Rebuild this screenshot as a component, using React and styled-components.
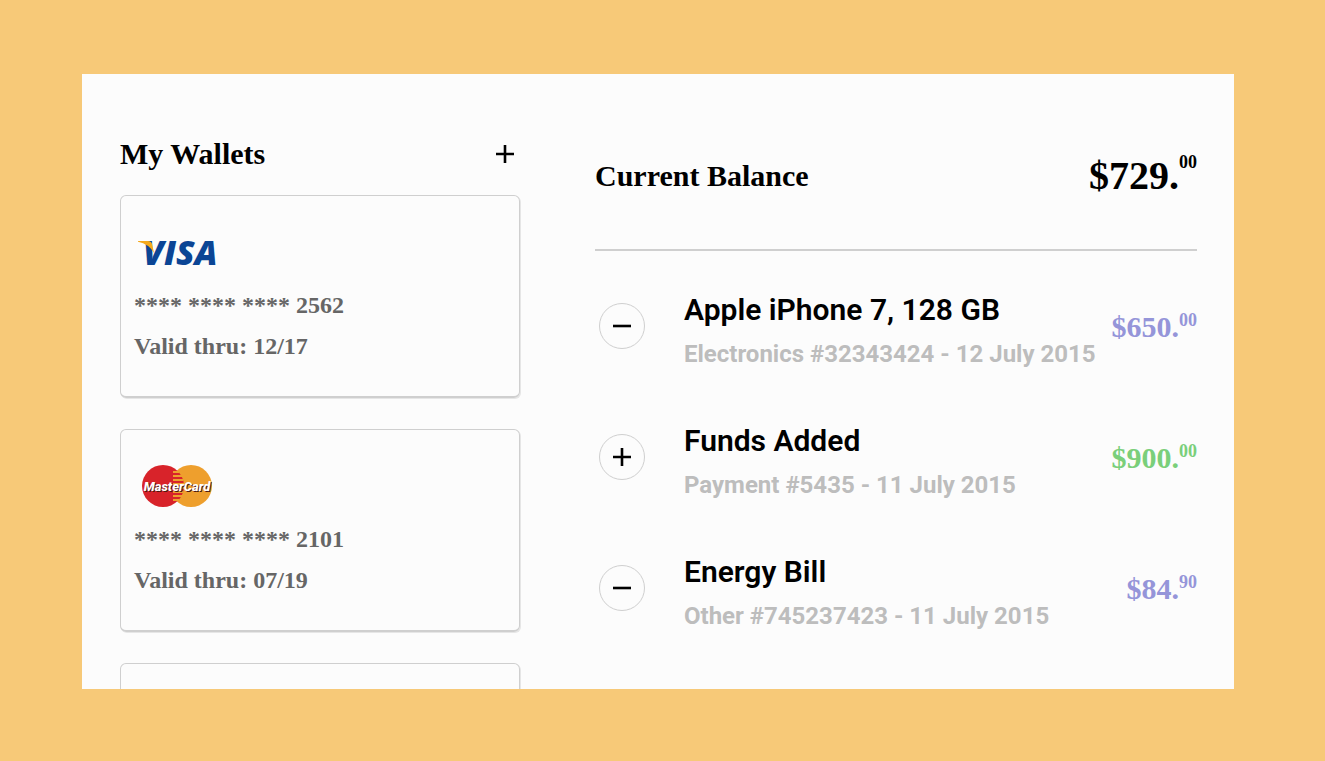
import React from "react";
import styled, { createGlobalStyle } from "styled-components";

const GlobalStyle = createGlobalStyle`
  *, *::before, *::after { box-sizing: border-box; }
  body {
    margin: 0;
    background: #f7c978;
    color: #000;
    font-family: "Liberation Serif", "Times New Roman", serif;
  }
  h1, h2, h3, p, ul { margin: 0; padding: 0; }
  ul { list-style: none; }
`;

const Page = styled.div`
  display: flex;
  height: 100vh;
  padding: 74px 91px 72px 82px;
`;

const Panel = styled.main`
  flex: 1;
  display: grid;
  grid-template-columns: minmax(0, 200fr) minmax(0, 301fr);
  align-items: start;
  column-gap: 75px;
  padding: 0 37px 0 38px;
  overflow: hidden;
  background: #fcfcfc;
`;

const Wallets = styled.section`
  padding-top: 60px;
`;

const WalletsHeader = styled.header`
  display: flex;
  align-items: center;
  justify-content: space-between;
  height: 40px;
  margin-bottom: 21px;
  padding-right: 3px;
`;

const Heading = styled.h2`
  font-size: 30px;
  line-height: 40px;
  font-weight: 700;
`;

const AddButton = styled.button`
  display: flex;
  padding: 0;
  border: 0;
  background: none;
  color: inherit;
  cursor: pointer;
`;

const CardList = styled.ul`
  display: flex;
  flex-direction: column;
  gap: 31px;
`;

const Card = styled.li`
  display: flex;
  flex-direction: column;
  align-items: flex-start;
  height: 203px;
  padding: 29px 13px 20px;
  border: 1px solid #cfcfcf;
  border-bottom-width: 2px;
  border-radius: 6px;
  box-shadow: 1px 1px 0 #e6e6e6;
`;

const CardLogo = styled.svg`
  display: block;
  flex: none;
  width: 88px;
  height: 56px;
  margin-bottom: 4px;
`;

const CardText = styled.p`
  color: #666;
  font-size: 24px;
  line-height: 41px;
  font-weight: 700;
  white-space: nowrap;
`;

const Activity = styled.section`
  padding-top: 76px;
`;

const Balance = styled.header`
  display: flex;
  align-items: center;
  justify-content: space-between;
  height: 101px;
  margin-bottom: 15px;
  padding-bottom: 48px;
  border-bottom: 2px solid #cfcfcf;
`;

const colors = { total: "#000", debit: "#9595d9", credit: "#7acf7a" };

const Money = styled.p`
  display: flex;
  align-items: flex-start;
  color: ${({ $tone }) => colors[$tone]};
  font-size: ${({ $tone }) => ($tone === "total" ? 40 : 30)}px;
  line-height: 40px;
  font-weight: 700;
`;

const Cents = styled.sup`
  font-size: 18px;
  line-height: ${({ $tone }) => ($tone === "total" ? 12 : 26)}px;
  font-weight: 700;
`;

const Row = styled.li`
  display: flex;
  align-items: center;
  height: 131px;
  padding-left: 4px;
  font-family: Roboto, "Liberation Sans", sans-serif;
`;

const Badge = styled.span`
  display: flex;
  flex: none;
  align-items: center;
  justify-content: center;
  width: 46px;
  height: 46px;
  margin: 0 39px 12px 0;
  border: 1px solid #cfcfcf;
  border-radius: 50%;
`;

const Details = styled.div`
  flex: 1;
  min-width: 0;
  white-space: nowrap;
`;

const Title = styled.h3`
  font-size: 30px;
  line-height: 44px;
  font-weight: 600;
`;

const Meta = styled.p`
  color: #bdbdbd;
  font-size: 24px;
  line-height: 44px;
  font-weight: 700;
`;

const Price = styled.div`
  margin-bottom: 10px;
  font-family: "Liberation Serif", "Times New Roman", serif;
`;

function SignIcon({ plus }) {
  return (
    <svg width="24" height="24" viewBox="0 0 24 24" fill="none" stroke="#000" strokeWidth="2.6" aria-hidden="true">
      <path d={plus ? "M3 12H21M12 3V21" : "M3 12H21"} />
    </svg>
  );
}

function Amount({ whole, cents, tone }) {
  return (
    <Money $tone={tone}>
      ${whole}.<Cents $tone={tone}>{cents}</Cents>
    </Money>
  );
}

function VisaLogo() {
  return (
    <CardLogo viewBox="0 0 88 56" role="img" aria-label="Visa">
      <text x="9" y="40" fill="#0b4595" fontFamily="'Open Sans', 'Noto Sans', sans-serif" fontSize="34" fontWeight="800" fontStyle="italic">
        VISA
      </text>
      <path d="M4 16H14Q17.5 16 18.2 19.5L20 28Q15 19 4 16.8Z" fill="#f6a91b" />
    </CardLogo>
  );
}

function MasterCardLogo() {
  return (
    <CardLogo viewBox="0 0 88 56" role="img" aria-label="MasterCard">
      <circle cx="57" cy="27" r="21" fill="#ee9f2d" />
      <circle cx="29" cy="27" r="21" fill="#d8232a" />
      <path
        d="M39 13H45M39 17H48M39 21H49M39 25H50M39 29H50M39 33H49M39 37H48M39 41H45"
        stroke="#ee9f2d"
        strokeWidth="1.8"
      />
      <text
        x="43"
        y="32"
        textAnchor="middle"
        fill="#fff"
        fontFamily="Roboto, 'Liberation Sans', sans-serif"
        fontSize="13"
        fontWeight="800"
        fontStyle="italic"
        style={{ textShadow: "1px 1px 0 #4a1a12" }}
      >
        MasterCard
      </text>
    </CardLogo>
  );
}

const wallets = [
  { Logo: VisaLogo, digits: "2562", valid: "12/17" },
  { Logo: MasterCardLogo, digits: "2101", valid: "07/19" },
];

const transactions = [
  { title: "Apple iPhone 7, 128 GB", meta: "Electronics #32343424 - 12 July 2015", whole: "650", cents: "00", tone: "debit" },
  { title: "Funds Added", meta: "Payment #5435 - 11 July 2015", whole: "900", cents: "00", tone: "credit" },
  { title: "Energy Bill", meta: "Other #745237423 - 11 July 2015", whole: "84", cents: "90", tone: "debit" },
];

export default function App() {
  return (
    <Page>
      <GlobalStyle />
      <Panel>
        <Wallets>
          <WalletsHeader>
            <Heading>My Wallets</Heading>
            <AddButton type="button" aria-label="Add wallet">
              <SignIcon plus />
            </AddButton>
          </WalletsHeader>
          <CardList>
            {wallets.map(({ Logo, digits, valid }) => (
              <Card key={digits}>
                <Logo />
                <CardText>**** **** **** {digits}</CardText>
                <CardText>Valid thru: {valid}</CardText>
              </Card>
            ))}
            <Card />
          </CardList>
        </Wallets>
        <Activity>
          <Balance>
            <Heading>Current Balance</Heading>
            <Amount whole="729" cents="00" tone="total" />
          </Balance>
          <ul>
            {transactions.map((t) => (
              <Row key={t.title}>
                <Badge>
                  <SignIcon plus={t.tone === "credit"} />
                </Badge>
                <Details>
                  <Title>{t.title}</Title>
                  <Meta>{t.meta}</Meta>
                </Details>
                <Price>
                  <Amount whole={t.whole} cents={t.cents} tone={t.tone} />
                </Price>
              </Row>
            ))}
          </ul>
        </Activity>
      </Panel>
    </Page>
  );
}
